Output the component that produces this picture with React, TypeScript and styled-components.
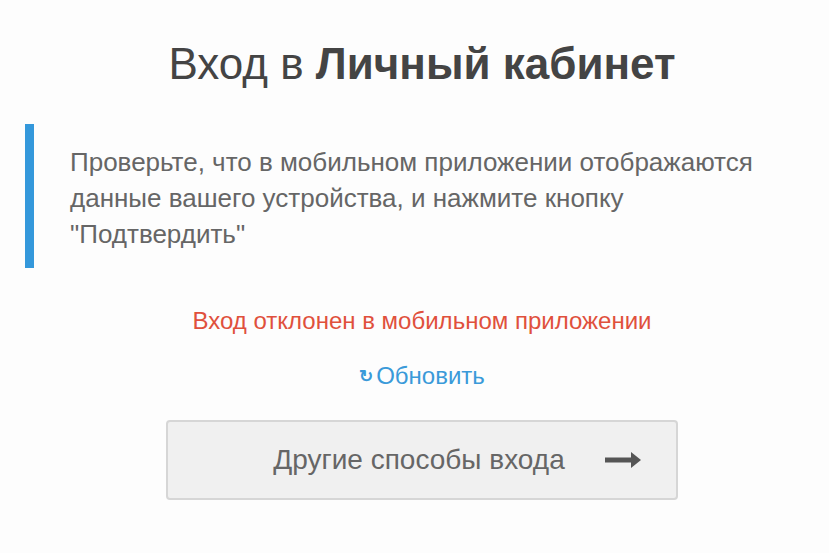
import React from "react";
import styled, { createGlobalStyle } from "styled-components";

const Global = createGlobalStyle`
  html, body {
    margin: 0;
    padding: 0;
    background: #fdfdfd;
    font-family: "Liberation Sans", Arial, sans-serif;
  }
`;

const Page = styled.div`
  width: 829px;
  height: 553px;
  box-sizing: border-box;
  padding: 40px 0 0 15px;
  display: flex;
  flex-direction: column;
`;

const Title = styled.h1`
  margin: 0;
  text-align: center;
  font-size: 44px;
  line-height: 48px;
  font-weight: 400;
  color: #444;

  b {
    font-weight: 700;
  }
`;

const Notice = styled.div`
  margin: 36px 0 0 10px;
  border-left: 9px solid #3498db;
  padding: 20px 0 16px 36px;
  font-size: 26px;
  line-height: 36px;
  color: #666;
  white-space: nowrap;
`;

const Status = styled.div`
  margin-top: 38px;
  text-align: center;
  font-size: 24px;
  line-height: 30px;
  color: #e0503c;
`;

const Refresh = styled.a`
  margin-top: 23px;
  align-self: center;
  display: flex;
  align-items: center;
  gap: 3px;
  font-size: 24px;
  line-height: 30px;
  color: #3a9ad9;
  text-decoration: none;
  cursor: pointer;
`;

const RefreshIcon = styled.span`
  font-size: 17px;
  font-weight: 700;
  padding-top: 3px;
`;

const OtherButton = styled.button`
  margin: 28px auto 0;
  width: 512px;
  height: 80px;
  box-sizing: border-box;
  background: #f0f0f0;
  border: 2px solid #d6d6d6;
  border-radius: 4px;
  display: flex;
  align-items: center;
  justify-content: center;
  gap: 40px;
  padding-left: 76px;
  font-family: inherit;
  font-size: 28px;
  color: #666;
  cursor: pointer;
`;

const Arrow = () => (
  <svg width="36" height="16" viewBox="0 0 36 16">
    <rect x="0" y="5.5" width="27" height="5" fill="#555" />
    <polygon points="26,0 36,8 26,16" fill="#555" />
  </svg>
);

export default function App() {
  return (
    <Page>
      <Global />
      <Title>
        Вход в <b>Личный кабинет</b>
      </Title>
      <Notice>
        Проверьте, что в мобильном приложении отображаются
        <br />
        данные вашего устройства, и нажмите кнопку
        <br />
        "Подтвердить"
      </Notice>
      <Status>Вход отклонен в мобильном приложении</Status>
      <Refresh>
        <RefreshIcon>↻</RefreshIcon>Обновить
      </Refresh>
      <OtherButton>
        <span>Другие способы входа</span>
        <Arrow />
      </OtherButton>
    </Page>
  );
}
